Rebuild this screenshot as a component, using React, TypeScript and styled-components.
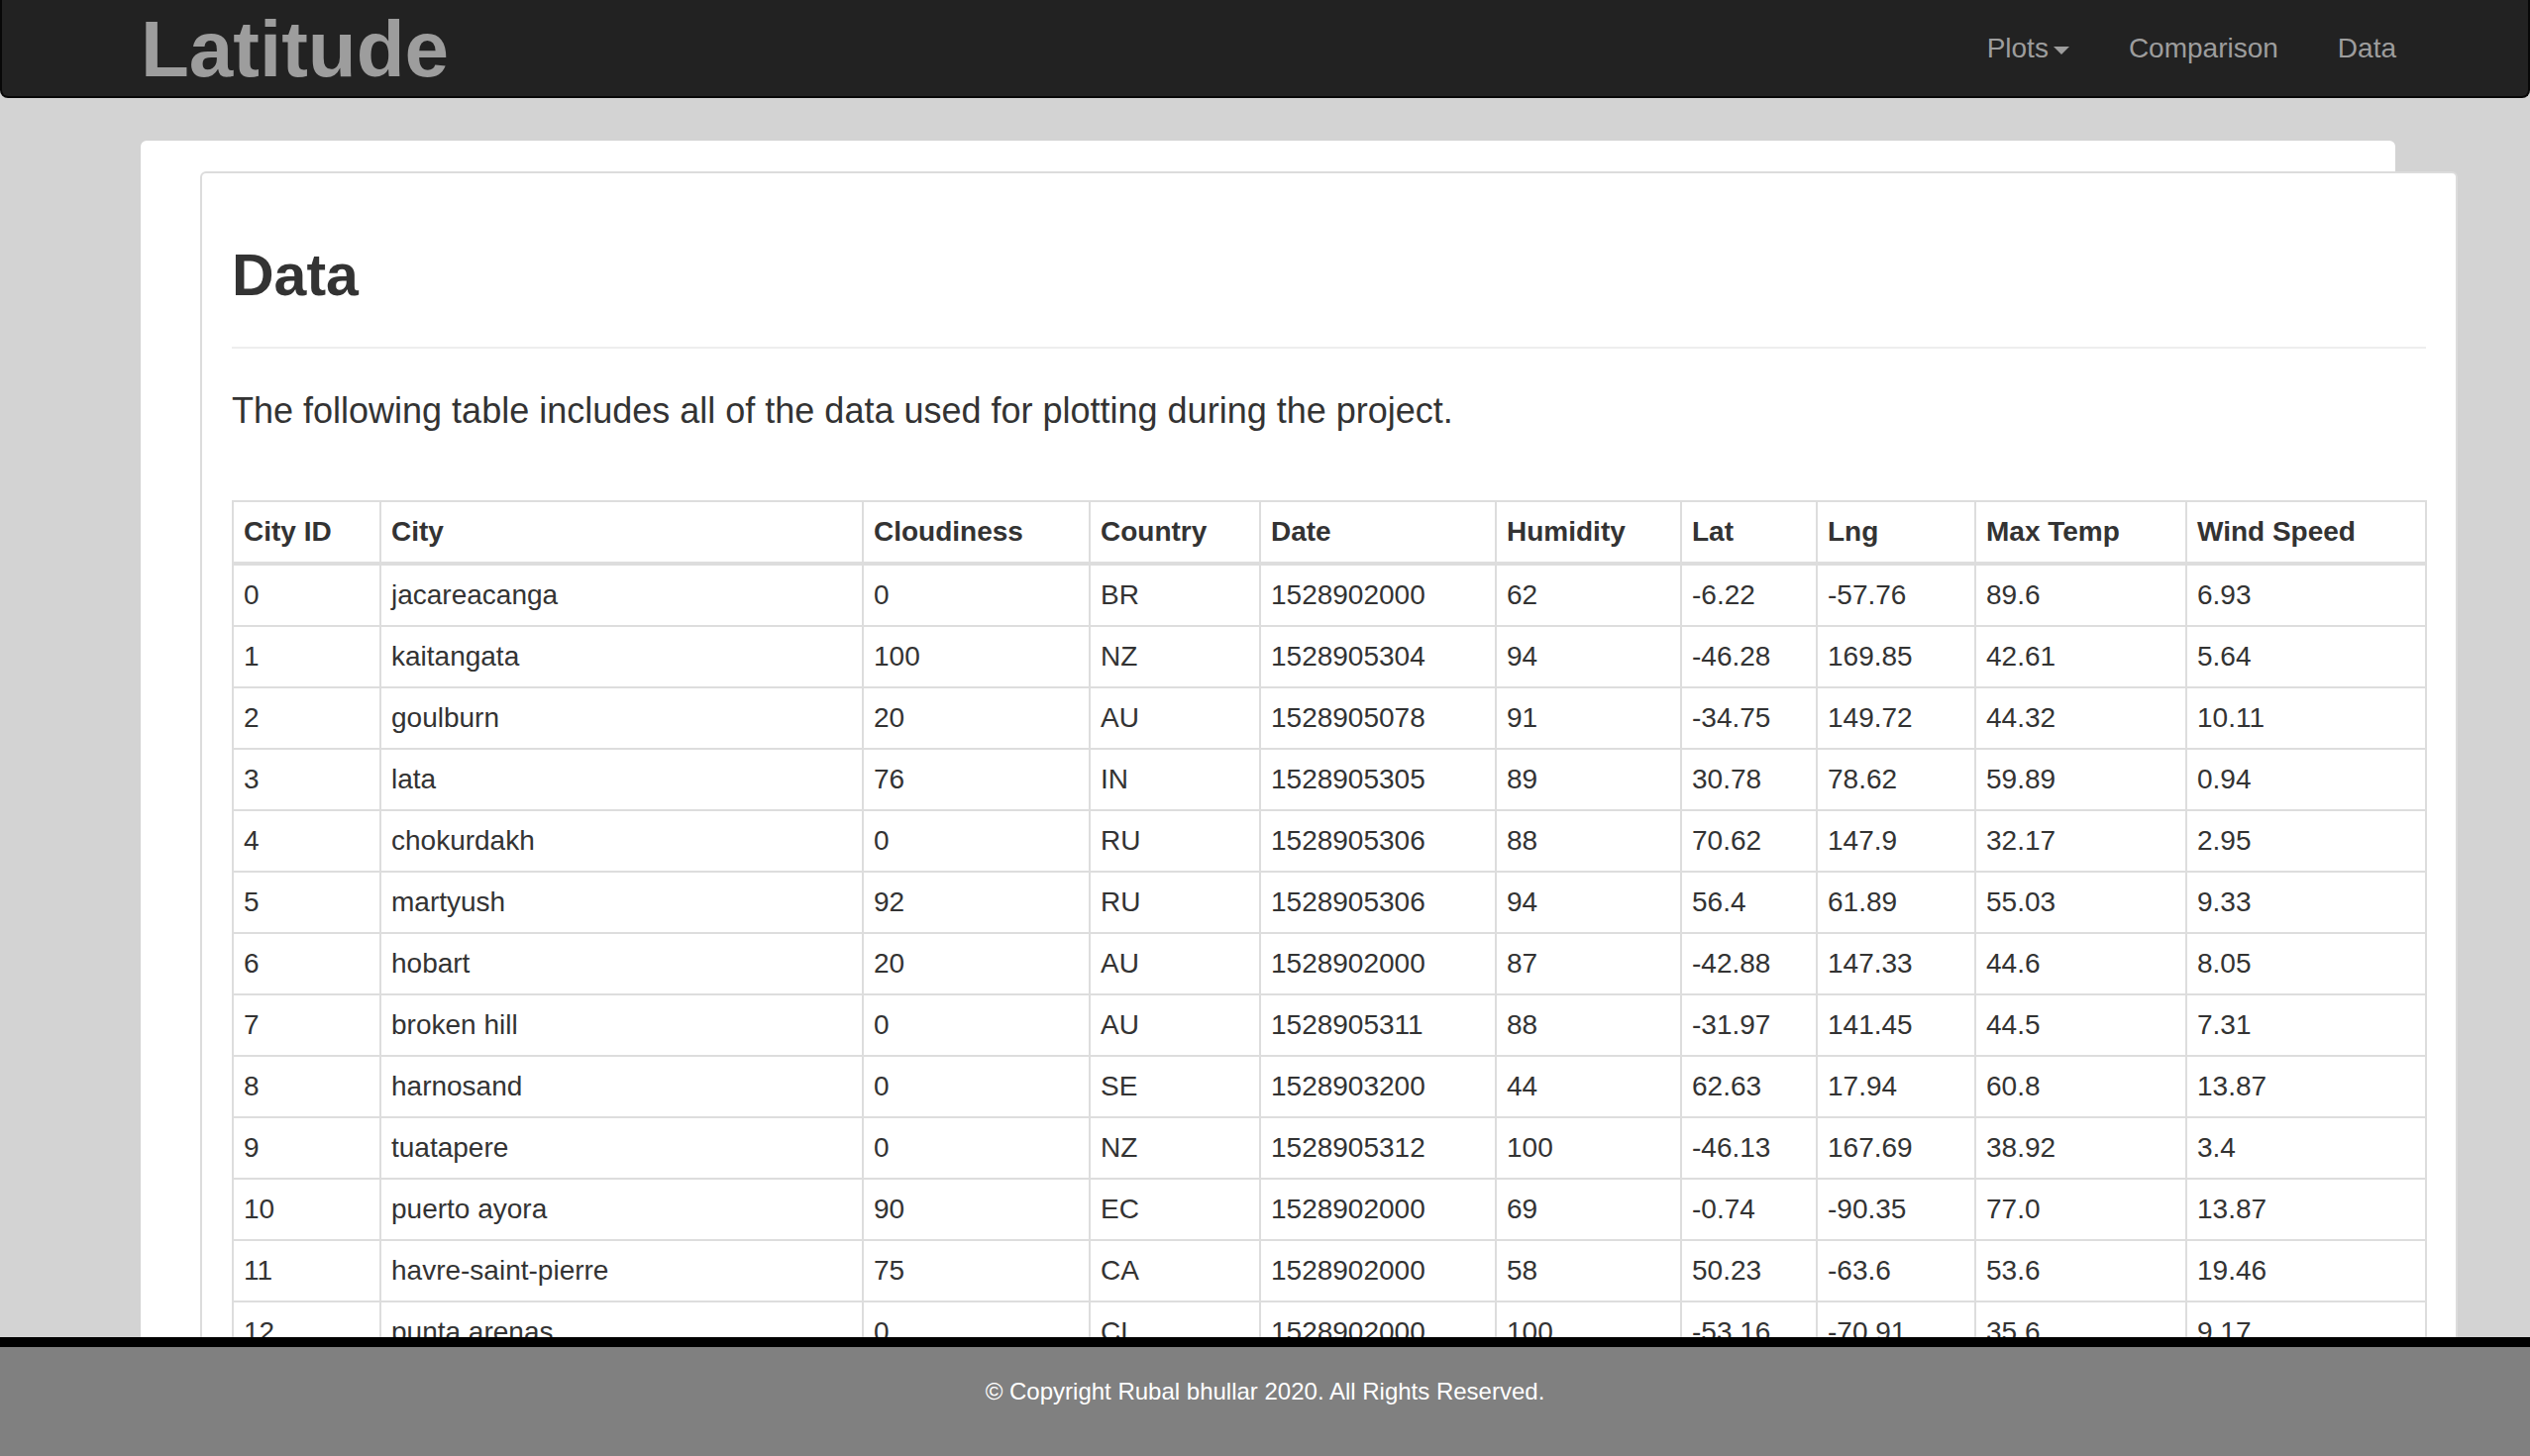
import React from "react";
import styled, { createGlobalStyle } from "styled-components";

const GlobalStyle = createGlobalStyle`
  html, body {
    margin: 0;
    padding: 0;
    background: #d3d3d3;
    font-family: "Liberation Sans", Arial, Helvetica, sans-serif;
    color: #333;
  }
  * { box-sizing: border-box; }
`;

type CityRow = [number, string, number, string, number, number, number, number, number | string, number];

const rows: CityRow[] = [
  [0, "jacareacanga", 0, "BR", 1528902000, 62, -6.22, -57.76, 89.6, 6.93],
  [1, "kaitangata", 100, "NZ", 1528905304, 94, -46.28, 169.85, 42.61, 5.64],
  [2, "goulburn", 20, "AU", 1528905078, 91, -34.75, 149.72, 44.32, 10.11],
  [3, "lata", 76, "IN", 1528905305, 89, 30.78, 78.62, 59.89, 0.94],
  [4, "chokurdakh", 0, "RU", 1528905306, 88, 70.62, 147.9, 32.17, 2.95],
  [5, "martyush", 92, "RU", 1528905306, 94, 56.4, 61.89, 55.03, 9.33],
  [6, "hobart", 20, "AU", 1528902000, 87, -42.88, 147.33, 44.6, 8.05],
  [7, "broken hill", 0, "AU", 1528905311, 88, -31.97, 141.45, 44.5, 7.31],
  [8, "harnosand", 0, "SE", 1528903200, 44, 62.63, 17.94, 60.8, 13.87],
  [9, "tuatapere", 0, "NZ", 1528905312, 100, -46.13, 167.69, 38.92, 3.4],
  [10, "puerto ayora", 90, "EC", 1528902000, 69, -0.74, -90.35, "77.0", 13.87],
  [11, "havre-saint-pierre", 75, "CA", 1528902000, 58, 50.23, -63.6, 53.6, 19.46],
  [12, "punta arenas", 0, "CL", 1528902000, 100, -53.16, -70.91, 35.6, 9.17],
];

const columns = [
  { label: "City ID", width: 149 },
  { label: "City", width: 487 },
  { label: "Cloudiness", width: 229 },
  { label: "Country", width: 172 },
  { label: "Date", width: 238 },
  { label: "Humidity", width: 187 },
  { label: "Lat", width: 137 },
  { label: "Lng", width: 160 },
  { label: "Max Temp", width: 213 },
  { label: "Wind Speed", width: 242 },
];

const App = () => {
  return (
    <>
      <GlobalStyle />
      <Page>
        <Navbar>
          <Brand href="#">Latitude</Brand>
          <NavList>
            <NavLink href="#">
              Plots<Caret />
            </NavLink>
            <NavLink href="#">Comparison</NavLink>
            <NavLink href="#">Data</NavLink>
          </NavList>
        </Navbar>

        <Main>
          <OuterCard>
            <InnerCard>
              <PageHeader>
                <Title>Data</Title>
              </PageHeader>
              <Lead>The following table includes all of the data used for plotting during the project.</Lead>
              <DataTable>
                <colgroup>
                  {columns.map((c) => (
                    <col key={c.label} width={c.width} />
                  ))}
                </colgroup>
                <thead>
                  <tr>
                    {columns.map((c) => (
                      <HeadCell key={c.label}>{c.label}</HeadCell>
                    ))}
                  </tr>
                </thead>
                <tbody>
                  {rows.map((r) => (
                    <tr key={r[0]}>
                      {r.map((v, i) => (
                        <Cell key={i}>{v}</Cell>
                      ))}
                    </tr>
                  ))}
                </tbody>
              </DataTable>
            </InnerCard>
          </OuterCard>
        </Main>

        <Footer>© Copyright Rubal bhullar 2020. All Rights Reserved.</Footer>
      </Page>
    </>
  );
};

const Page = styled.div`
  height: 100vh;
  display: flex;
  flex-direction: column;
  overflow: hidden;
`;

const Navbar = styled.nav`
  flex: 0 0 99px;
  height: 99px;
  display: flex;
  justify-content: space-between;
  align-items: flex-start;
  background: #222;
  border: 2px solid #080808;
  border-top: none;
  border-radius: 0 0 8px 8px;
  padding: 0 103px 0 140px;
`;

const Brand = styled.a`
  font-size: 80px;
  line-height: 80px;
  font-weight: 700;
  color: #9d9d9d;
  text-decoration: none;
  padding-top: 10px;
`;

const NavList = styled.div`
  display: flex;
  align-items: flex-start;
`;

const NavLink = styled.a`
  font-size: 28px;
  line-height: 40px;
  padding: 29px 30px 0;
  color: #9d9d9d;
  text-decoration: none;
  white-space: nowrap;
`;

const Caret = styled.span`
  display: inline-block;
  width: 0;
  height: 0;
  margin-left: 5px;
  vertical-align: middle;
  border-top: 8px solid #9d9d9d;
  border-left: 8px solid transparent;
  border-right: 8px solid transparent;
`;

const Main = styled.main`
  flex: 1 1 auto;
  overflow: hidden;
  background: #d3d3d3;
  padding: 43px 0 0 142px;
`;

const OuterCard = styled.section`
  width: 2276px;
  min-height: 1400px;
  background: #fff;
  border-radius: 6px;
  padding: 31px 0 0 60px;
`;

const InnerCard = styled.div`
  width: 2279px;
  min-height: 1300px;
  background: #fff;
  border: 2px solid #dcdcdc;
  border-radius: 6px;
  padding: 0 30px 40px;
`;

const PageHeader = styled.div`
  margin-top: 71px;
  padding-bottom: 40px;
  border-bottom: 2px solid #eee;
`;

const Title = styled.h1`
  margin: 0;
  font-size: 59px;
  line-height: 64px;
  font-weight: 700;
  color: #333;
`;

const Lead = styled.p`
  margin: 38px 0 65px;
  font-size: 36px;
  line-height: 50px;
  color: #333;
`;

const DataTable = styled.table`
  width: 100%;
  table-layout: fixed;
  border-collapse: collapse;
  font-size: 28px;
  color: #333;
`;

const HeadCell = styled.th`
  text-align: left;
  font-weight: 700;
  padding: 10px;
  line-height: 40px;
  border: 2px solid #ddd;
  border-bottom-width: 4px;
  white-space: nowrap;
`;

const Cell = styled.td`
  text-align: left;
  padding: 10px;
  line-height: 40px;
  border: 2px solid #ddd;
  white-space: nowrap;
`;

const Footer = styled.footer`
  flex: 0 0 120px;
  height: 120px;
  background: #808080;
  border-top: 10px solid #000;
  color: #fff;
  font-size: 24px;
  line-height: 34px;
  text-align: center;
  padding-top: 28px;
`;

export default App;
